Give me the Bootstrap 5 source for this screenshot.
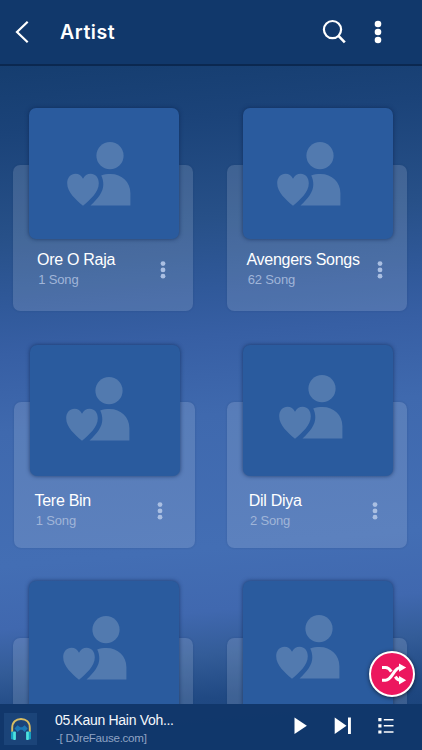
<!DOCTYPE html>
<html lang="en">
<head>
<meta charset="utf-8">
<meta name="viewport" content="width=device-width, initial-scale=1">
<title>Artist</title>
<link href="https://cdn.jsdelivr.net/npm/bootstrap@5.3.0/dist/css/bootstrap.min.css" rel="stylesheet">
<style>
body{font-family:"Liberation Sans",Arial,sans-serif;background:#1c4680}
.screen{height:750px;background:linear-gradient(175deg,#153d6f 8%,#1b4379 17%,#275088 30%,#30599a 39%,#375fa4 45%,#3f69ae 55%,#436eb4 72%,#4068af 80%,#335c98 85.5%,#204983 91%,#153d72 100%)}
.topbar{height:66px;background:#11386b;border-bottom:2px solid #0b2850;padding:0 40.5px 1px 15px;flex:none}
.topbar h1{font:600 19.5px/24px Inter,sans-serif;letter-spacing:.55px;margin:0 0 0 30px}
.tool{background:none;border:0;padding:0;color:inherit;display:flex;line-height:1}
.artists{padding-top:42px;flex:1 1 0;min-height:0}
.artist{height:236.7px;padding-left:var(--x)}
.panel{width:180.5px;height:146px;margin-top:57px;border-radius:7px;background:rgba(225,228,240,.16);box-shadow:0 0 2px rgba(20,50,100,.25)}
.cover{width:150px;height:131px;margin:-57px 0 0 16.4px;padding:var(--iy) 0 0 var(--ix);border-radius:7px;background:#2a5b9e;box-shadow:0 0 4px rgba(12,36,80,.7);position:relative}
.cover svg{display:block;width:64px;height:64px;fill:#527aaf}
.info{padding:var(--ty) 26px 0 var(--tx)}
.title{font-size:16px;line-height:20px;letter-spacing:-.28px;white-space:nowrap;color:#fff}
.count{font-size:13px;line-height:19px;letter-spacing:-.15px;color:#a0b5d8;padding-left:1.2px}
.more{color:#aabfe2}
.a1{--x:12.5px;--ix:38.4px;--iy:33.5px;--tx:24.5px;--ty:11px;--mx:147px}
.a2{--x:15.5px;--ix:34.5px;--iy:33.7px;--tx:20px;--ty:11px;--mx:150.5px}
.a3{--x:14px;--ix:35.5px;--iy:32.5px;--tx:20.5px;--ty:15.5px;--mx:143px}
.a4{--x:15.7px;--ix:35.8px;--iy:30.2px;--tx:22px;--ty:15.5px;--mx:145.3px}
.a5{--x:12.5px;--ix:34.4px;--iy:34.8px}
.a6{--x:15.5px;--ix:33px;--iy:34px}
.info .more{position:absolute;left:var(--mx);top:calc(var(--ty) + 11px)}
.player{height:46px;flex:none;background:rgba(17,55,106,.97);padding:0 28px 0 4px;position:relative}
.thumb{width:33px;height:32px;background:#1b4479;margin-top:3px}
.song{font-size:14px;line-height:18px;letter-spacing:-.31px;color:#f4f7fc;margin-top:3px}
.site{font-size:11.6px;line-height:17px;letter-spacing:-.28px;color:#8fa3c4;padding-left:1px}
.now{margin-left:18px;width:180px}
.kebab{margin-left:28px}
.controls{gap:26.5px;margin-top:-2px}
.shuffle{position:absolute;right:7px;top:-53px;width:46px;height:46px;border-radius:50%;border:2px solid #fff;background:#ec165e;box-shadow:0 1px 4px rgba(0,0,0,.55);padding:0 0 0 3px;display:flex}
</style>
<script src="https://cdn.jsdelivr.net/npm/bootstrap@5.3.0/dist/js/bootstrap.bundle.min.js"></script>
</head>
<body>
<svg class="d-none" aria-hidden="true">
<symbol id="fan" viewBox="0 0 64 64"><circle cx="43" cy="13.7" r="13.6"/><path d="M34.2 33.4C37 32.3 40 31.9 43.5 31.9C55 31.9 63.4 40 63.4 51V63.5H23.5C31 56.5 36.3 50 36.3 42.5C36.3 39 35.6 36 34.2 33.4Z"/><path d="M16 63.7C9 57.5 .2 50.5 .2 41.2C.2 35.5 3.8 31.7 8.5 31.7C11.8 31.7 14.6 33.6 16 36.8C17.4 33.6 20.2 31.7 23.7 31.7C28.3 31.7 31.8 35.5 31.8 41.2C31.8 50.5 23 57.5 16 63.7Z"/></symbol>
<symbol id="dots" viewBox="0 0 6 18"><circle cx="3" cy="2.6" r="2.4"/><circle cx="3" cy="8.9" r="2.4"/><circle cx="3" cy="15.2" r="2.4"/></symbol>
</svg>
<div class="screen d-flex flex-column overflow-hidden">
<header class="topbar d-flex align-items-center text-white">
<button class="tool" aria-label="Back"><svg width="15" height="24" viewBox="0 0 15 24" fill="none" stroke="currentColor" stroke-width="2.2"><path d="M12.7 1.7L2 12L12.7 22.3"/></svg></button>
<h1>Artist</h1>
<button class="tool ms-auto" aria-label="Search"><svg width="24" height="25" viewBox="0 0 24 25" fill="none" stroke="currentColor" stroke-width="2.2"><circle cx="10.5" cy="10.6" r="8.6"/><path d="M16.5 16.8L22.8 23.3" stroke-width="2.6"/></svg></button>
<button class="tool kebab" aria-label="More"><svg width="8" height="24" viewBox="0 0 8 24" fill="currentColor"><circle cx="4" cy="4" r="3.3"/><circle cx="4" cy="12" r="3.3"/><circle cx="4" cy="20" r="3.3"/></svg></button>
</header>
<main class="artists overflow-hidden">
<div class="row g-0">
<article class="artist col-6 a1"><div class="panel d-flex flex-column"><div class="cover"><svg><use href="#fan"/></svg></div><div class="info position-relative"><div class="title">Ore O Raja</div><div class="count">1 Song</div><button class="tool more" aria-label="More"><svg width="6" height="18" fill="currentColor"><use href="#dots"/></svg></button></div></div></article>
<article class="artist col-6 a2"><div class="panel d-flex flex-column"><div class="cover"><svg><use href="#fan"/></svg></div><div class="info position-relative"><div class="title">Avengers Songs</div><div class="count">62 Song</div><button class="tool more" aria-label="More"><svg width="6" height="18" fill="currentColor"><use href="#dots"/></svg></button></div></div></article>
<article class="artist col-6 a3"><div class="panel d-flex flex-column"><div class="cover"><svg><use href="#fan"/></svg></div><div class="info position-relative"><div class="title">Tere Bin</div><div class="count">1 Song</div><button class="tool more" aria-label="More"><svg width="6" height="18" fill="currentColor"><use href="#dots"/></svg></button></div></div></article>
<article class="artist col-6 a4"><div class="panel d-flex flex-column"><div class="cover"><svg><use href="#fan"/></svg></div><div class="info position-relative"><div class="title">Dil Diya</div><div class="count">2 Song</div><button class="tool more" aria-label="More"><svg width="6" height="18" fill="currentColor"><use href="#dots"/></svg></button></div></div></article>
<article class="artist col-6 a5"><div class="panel d-flex flex-column"><div class="cover"><svg><use href="#fan"/></svg></div></div></article>
<article class="artist col-6 a6"><div class="panel d-flex flex-column"><div class="cover"><svg><use href="#fan"/></svg></div></div></article>
</div>
</main>
<footer class="player d-flex align-items-center text-white">
<div class="thumb d-flex align-items-center justify-content-center"><svg width="22" height="24" viewBox="0 0 22 24"><path d="M2.2 15V11C2.2 5 6 2 11 2S19.8 5 19.8 11V15" fill="none" stroke="#d9bd62" stroke-width="1.9"/><path d="M4.5 11.5L7.5 8.3L10.2 10.2H12.2L14.7 8.3L17.7 11.5L14.7 15L12.2 12.8H10.2L7.5 15Z" fill="#1b78b5"/><rect x="1" y="14.5" width="3" height="8" rx="1.2" fill="#169fc0"/><rect x="3.2" y="14.5" width="2.7" height="8.5" rx=".8" fill="#4de3df"/><rect x="18" y="14.5" width="3" height="8" rx="1.2" fill="#169fc0"/><rect x="16.1" y="14.5" width="2.7" height="8.5" rx=".8" fill="#4de3df"/></svg></div>
<div class="now"><div class="song">05.Kaun Hain Voh...</div><div class="site">-[ DJreFause.com]</div></div>
<div class="controls d-flex align-items-center ms-auto">
<button class="tool" aria-label="Play"><svg width="13" height="18" viewBox="0 0 13 18" fill="currentColor"><path d="M.5 .4V17L12.9 8.7Z"/></svg></button>
<button class="tool" aria-label="Next"><svg width="18" height="18" viewBox="0 0 18 18" fill="currentColor"><path d="M.7 .4V17L12.5 8.7ZM14 .4H16.9V17H14Z"/></svg></button>
<button class="tool" aria-label="Queue"><svg width="16" height="18" viewBox="0 0 16 18" fill="currentColor"><path d="M.3 1H3.5V4.2H.3ZM.3 7.2H3.5V10.4H.3ZM.3 13.4H3.5V16.6H.3ZM5.8 1.9H15.5V3.4H5.8ZM5.8 8.1H15.5V9.6H5.8ZM5.8 14.2H15.5V15.7H5.8Z"/></svg></button>
</div>
<button class="shuffle align-items-center justify-content-center" aria-label="Shuffle"><svg width="26" height="22" viewBox="0 0 26 22" fill="none" stroke="#fff" stroke-width="3"><path d="M1 17.2H4.5C11.5 17.2 12.5 4.6 19.5 4.6H20M1 4.6H4.5C7.3 4.6 9 6.6 10.3 8.6M14.3 13.6C15.6 15.7 17.2 17.2 19.5 17.2H20"/><path d="M18 .4L25.2 4.6L18 8.8ZM18 13L25.2 17.2L18 21.4Z" fill="#fff" stroke="none"/></svg></button>
</footer>
</div>
</body>
</html>
